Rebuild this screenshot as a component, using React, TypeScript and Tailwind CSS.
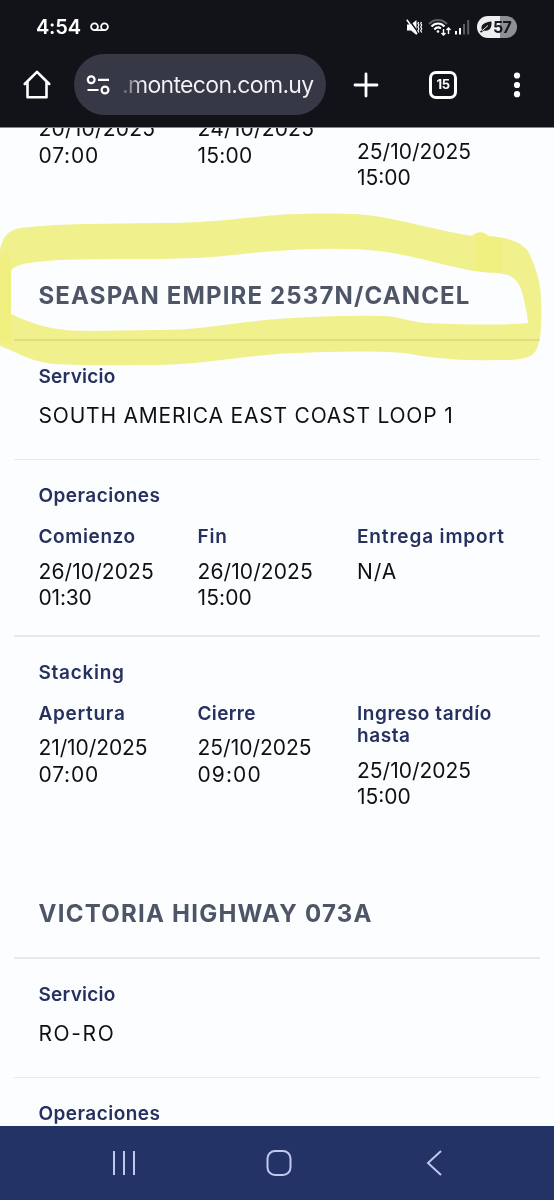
import React from 'react';

interface Line {
  text: string;
  tracking: string;
}

interface Field {
  label: string;
  labelTracking: string;
  lines: Line[];
}

const operations: Field[] = [
  {
    label: 'Comienzo',
    labelTracking: 'tracking-[0.6px]',
    lines: [
      { text: '26/10/2025', tracking: 'tracking-[0.1px]' },
      { text: '01:30', tracking: 'tracking-[-0.2px]' },
    ],
  },
  {
    label: 'Fin',
    labelTracking: 'tracking-[0.8px]',
    lines: [
      { text: '26/10/2025', tracking: 'tracking-[0.1px]' },
      { text: '15:00', tracking: 'tracking-[0.1px]' },
    ],
  },
  {
    label: 'Entrega import',
    labelTracking: 'tracking-[0.85px]',
    lines: [{ text: 'N/A', tracking: 'tracking-[0.9px]' }],
  },
];

const stacking: Field[] = [
  {
    label: 'Apertura',
    labelTracking: 'tracking-[0.7px]',
    lines: [
      { text: '21/10/2025', tracking: 'tracking-[-0.1px]' },
      { text: '07:00', tracking: 'tracking-[0.8px]' },
    ],
  },
  {
    label: 'Cierre',
    labelTracking: 'tracking-[0.35px]',
    lines: [
      { text: '25/10/2025', tracking: 'tracking-[0px]' },
      { text: '09:00', tracking: 'tracking-[1.1px]' },
    ],
  },
  {
    label: 'Ingreso tardío hasta',
    labelTracking: 'tracking-[0.55px]',
    lines: [
      { text: '25/10/2025', tracking: 'tracking-[0px]' },
      { text: '15:00', tracking: 'tracking-[0px]' },
    ],
  },
];

const StatusBar: React.FC = () => (
  <div className="flex h-[54px] items-center pl-[36px] pr-[37px]">
    <span className="text-[20px] font-semibold leading-none tracking-[-0.2px]">4:54</span>
    <svg className="ml-[9px]" width="19" height="10" viewBox="0 0 19 10" fill="none" stroke="white" strokeWidth="1.8">
      <circle cx="4.5" cy="4.7" r="3.4" />
      <circle cx="14.5" cy="4.7" r="3.4" />
      <path d="M4.5 8.1h10" />
    </svg>
    <div className="ml-auto flex items-center">
      {/* Muted, vibrate */}
      <svg width="17" height="17" viewBox="0 0 17 17" fill="white">
        <path d="M1 5.500h4L10.500 1v15L5 11.500H1z" />
        <path d="M2.400 0 12.400 13.700" stroke="#121318" strokeWidth="1.500" />
        <path d="M.8 .8 11 15" stroke="white" strokeWidth="1.500" />
        <path d="M12.700 3l-.8 1.300 1 1.800-1 1.800 1 1.800-1 1.800 1 2M15.500 3l-.8 1.300 1 1.800-1 1.800 1 1.800-1 1.800 1 2" fill="none" stroke="white" strokeWidth="1.200" />
      </svg>
      {/* Wifi */}
      <svg className="ml-[5px]" width="24" height="18" viewBox="0 0 24 18" fill="none" stroke="white" strokeWidth="2">
        <path d="M1 6C6 0.500 14 0.500 19 6" stroke="#5c5d62" />
        <path d="M3.500 8.500C7 4.500 13 4.500 16.500 8.500" />
        <path d="M6.300 11.500C8.500 9 11 9 13 10.500" />
        <circle cx="10" cy="13.500" r="1.300" fill="white" stroke="none" />
        <path d="M15.500 11v6M13.500 15l2 2 2-2M20.500 16v-6M18.500 12l2-2 2 2" strokeWidth="1.400" />
      </svg>
      {/* Signal */}
      <svg className="ml-[3px]" width="15" height="16" viewBox="0 0 15 16">
        <path d="M0 12h2v3.500H0zM4 9h2v6.500H4z" fill="white" />
        <path d="M8 5h2v10.500H8zM12.200 1h2v14.500h-2z" fill="#5c5d62" />
      </svg>
      <div className="ml-[7px] flex h-[22px] w-[40px] items-center rounded-full bg-linear-to-r from-[#eeeef0] from-57% to-[#8e8f93] to-57% pl-[3px] text-[#17181c]">
        <svg width="12" height="12" viewBox="0 0 12 12" fill="currentColor">
          <path d="M11.500 0.500C12 7 9.500 10.500 4 9.500L1 11.800 0 10.500 2 9C0 4 4 1.200 11.500.5z" />
          <path d="M2 9.800 8 4.500" stroke="#eeeef0" strokeWidth="1" />
        </svg>
        <span className="ml-[1px] text-[16px] font-bold leading-none tracking-[-0.8px]">57</span>
      </div>
    </div>
  </div>
);

const AddressBar: React.FC = () => (
  <div className="flex h-[61px] items-center pl-[23px]">
    <svg width="28" height="29" viewBox="0 0 28 29" fill="none" stroke="white" strokeWidth="2.600" strokeLinecap="round" strokeLinejoin="round">
      <path d="M1.800 14 14 1.800 26.200 14M4.500 12v15.300h19V12" />
    </svg>
    <div className="ml-[23px] flex h-[61px] w-[252px] items-center rounded-full bg-[#363846] pl-[12px]">
      <svg width="24" height="20" viewBox="0 0 24 20" fill="none" stroke="white" strokeWidth="2.200">
        <circle cx="5.200" cy="4.800" r="3.400" />
        <circle cx="19" cy="15" r="3.400" />
        <path d="M12 4.800h11M1.500 15h11" />
      </svg>
      <span className="ml-[12px] bg-linear-to-r from-[#5c5e6b] to-[#f2f2f8] to-[22px] bg-clip-text text-[23px] leading-[32px] text-transparent tracking-[-0.67px] whitespace-nowrap">
        .montecon.com.uy
      </span>
    </div>
    <svg className="ml-[27px]" width="26" height="26" viewBox="0 0 26 26" stroke="white" strokeWidth="2.800" strokeLinecap="round">
      <path d="M13 2v22M2 13h22" />
    </svg>
    <div className="ml-[50px] flex h-[28px] w-[28px] items-center justify-center rounded-[7px] border-3 border-white text-[13px] font-bold leading-none tracking-[-0.5px]">
      15
    </div>
    <svg className="ml-[56px]" width="8" height="26" viewBox="0 0 8 26" fill="white">
      <circle cx="4" cy="3.500" r="3.100" />
      <circle cx="4" cy="13" r="3.100" />
      <circle cx="4" cy="22.200" r="3.100" />
    </svg>
  </div>
);

const Label: React.FC<{ children: React.ReactNode; className: string }> = ({ children, className }) => (
  <div className={`text-[19px] font-semibold leading-[22.5px] text-[#26315f] ${className}`}>{children}</div>
);

const Divider: React.FC = () => <div className="ml-[14px] h-[1.5px] w-[526px] bg-[#e9e9eb]" />;

const FieldGrid: React.FC<{ fields: Field[] }> = ({ fields }) => (
  <div className="mt-[18.5px] grid grid-cols-[159px_159.5px_160px]">
    {fields.map((field) => (
      <div key={field.label}>
        <Label className={field.labelTracking}>{field.label}</Label>
        <div className="mt-[10px] text-[21px] leading-[26.6px]">
          {field.lines.map((line) => (
            <div key={line.text} className={line.tracking}>{line.text}</div>
          ))}
        </div>
      </div>
    ))}
  </div>
);

const Service: React.FC<{ name: string; tracking: string }> = ({ name, tracking }) => (
  <section className="h-[118px] pl-[38.5px] pt-[25px]">
    <Label className="tracking-[0.25px]">Servicio</Label>
    <div className={`mt-[15px] text-[21px] leading-[26.6px] whitespace-nowrap ${tracking}`}>{name}</div>
  </section>
);

const VesselTitle: React.FC<{ name: string; tracking: string }> = ({ name, tracking }) => (
  <h2 className={`h-[58px] pl-[38.5px] text-[24px] font-bold leading-[30px] whitespace-nowrap text-[#4d5566] ${tracking}`}>{name}</h2>
);

// Hand-drawn marker around the cancelled vessel
const Marker: React.FC = () => (
  <svg className="absolute left-0 top-[200px] mix-blend-multiply" width="554" height="180" viewBox="0 200 554 180">
    <path
      fill="#f4f38d"
      fillRule="evenodd"
      d="M0 249C3 238 6 231 20 228C60 223 110 224 160 223C210 223 240 218 277 215C310 213 345 213 367 215C400 219 440 231 472 236C476 231 484 231 488 236C508 237 521 242 528 251C535 265 541 282 541 300C542 325 541 343 535 352C528 361 510 360 495 360C460 361 430 358 405 353C360 350 320 352 277 354C240 357 200 364 160 365C120 365 85 366 55 364C30 362 15 351 0 346ZM11 271C15 263 35 262 60 260C105 258 150 260 195 258C225 257 250 252 277 251C315 248 350 248 380 251C415 256 445 266 474 271C490 273 503 272 512 277C523 284 524 302 527 314L528 323C500 326 450 324 425 323C405 321 400 316 380 316C345 315 310 317 277 319C235 322 200 330 160 330C125 330 90 332 65 330C45 328 25 321 11 314Z"
    />
    <path fill="#f4f27c" fillOpacity="0.6" d="M475 236C479 231 484 232 488 236L502 238V271C492 274 482 272 475 271Z" />
    <path fill="#f4f27c" fillOpacity="0.6" d="M0 258L9 250 11 271V345L0 341Z" />
  </svg>
);

const NavigationBar: React.FC = () => (
  <nav className="flex h-[74px] shrink-0 items-start bg-[#233365] pl-[112px] pt-[23.5px] text-[#bfc8ee]">
    <svg width="24" height="26" viewBox="0 0 24 26" stroke="currentColor" strokeWidth="2">
      <path d="M2 1v24M12 1v24M22 1v24" />
    </svg>
    <svg className="ml-[130px]" width="26" height="26" viewBox="0 0 26 26" fill="none" stroke="currentColor" strokeWidth="2">
      <rect x="1.500" y="1" width="23" height="24" rx="7.500" />
    </svg>
    <svg className="ml-[134px]" width="17" height="26" viewBox="0 0 17 26" fill="none" stroke="currentColor" strokeWidth="2">
      <path d="M15 1 2 13l13 12" />
    </svg>
  </nav>
);

export const App: React.FC = () => (
  <div className="relative flex h-[1200px] w-[554px] flex-col overflow-hidden bg-[#fbfdfe] font-['Inter',sans-serif] text-[#101012]">
    <header className="h-[128px] shrink-0 border-b border-[#8a8790] bg-[#121318] text-white">
      <StatusBar />
      <AddressBar />
    </header>

    <main className="min-h-0 flex-1 overflow-hidden">
      {/* Tail of the previous vessel */}
      <div className="-mt-[12px] grid h-[165px] grid-cols-[159px_159.5px_160px] pl-[38.5px] text-[21px] leading-[26.6px]">
        <div className="tracking-[0.2px]">20/10/2025<br /><span className="tracking-[0.8px]">07:00</span></div>
        <div className="tracking-[0.2px]">24/10/2025<br />15:00</div>
        <div className="pt-[22.5px]">25/10/2025<br />15:00</div>
      </div>

      <VesselTitle name="SEASPAN EMPIRE 2537N/CANCEL" tracking="tracking-[1.15px]" />
      <Divider />
      <Service name="SOUTH AMERICA EAST COAST LOOP 1" tracking="tracking-[0.8px]" />
      <Divider />
      <section className="h-[175px] pl-[38.5px] pt-[25px]">
        <Label className="tracking-[0.45px]">Operaciones</Label>
        <FieldGrid fields={operations} />
      </section>
      <Divider />
      <section className="h-[262.5px] pl-[38.5px] pt-[25px]">
        <Label className="tracking-[0.7px]">Stacking</Label>
        <FieldGrid fields={stacking} />
      </section>

      <VesselTitle name="VICTORIA HIGHWAY 073A" tracking="tracking-[1.25px]" />
      <Divider />
      <Service name="RO-RO" tracking="tracking-[1.6px]" />
      <Divider />
      <section className="pl-[38.5px] pt-[25px]">
        <Label className="tracking-[0.45px]">Operaciones</Label>
      </section>
    </main>

    <Marker />
    <NavigationBar />
  </div>
);

export default App;
